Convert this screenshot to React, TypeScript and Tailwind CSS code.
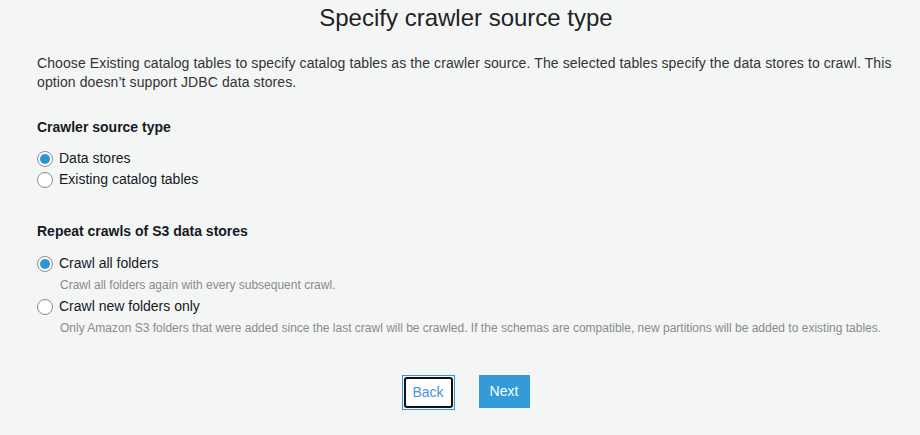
import React from "react";

function Radio({ checked }: { checked: boolean }) {
  return (
    <span className="flex h-[16px] w-[16px] shrink-0 items-center justify-center rounded-full border border-[#8c8c8c] bg-white">
      {checked && <span className="h-[10px] w-[10px] rounded-full bg-[#2e94d6]" />}
    </span>
  );
}

function Option({ checked, label }: { checked: boolean; label: string }) {
  return (
    <label className="flex h-[21px] items-center gap-[6px] text-[14px] text-[#16191f]">
      <Radio checked={checked} />
      <span>{label}</span>
    </label>
  );
}

export default function App() {
  return (
    <div
      className="min-h-[435px] w-[920px] bg-[#f4f6f6] pl-[37px] pr-[25px] pt-[3px]"
      style={{ fontFamily: '"Liberation Sans", Arial, sans-serif' }}
    >
      <h1 className="text-center text-[24px] leading-[30px] text-[#222]">Specify crawler source type</h1>
      <p className="mt-[21px] text-[14px] leading-[19px] tracking-[0.1px] text-[#333]">
        Choose Existing catalog tables to specify catalog tables as the crawler source. The selected tables specify the data stores to crawl. This option doesn’t support JDBC data stores.
      </p>
      <h2 className="mt-[26px] text-[14px] font-bold leading-[19px] text-[#16191f]">Crawler source type</h2>
      <div className="mt-[11px] flex flex-col">
        <Option checked label="Data stores" />
        <Option checked={false} label="Existing catalog tables" />
      </div>
      <h2 className="mt-[32px] text-[14px] font-bold leading-[19px] text-[#16191f]">Repeat crawls of S3 data stores</h2>
      <div className="mt-[12px] flex flex-col">
        <Option checked label="Crawl all folders" />
        <div className="pl-[23px] text-[12px] leading-[22px] text-[#8a8a8a]">Crawl all folders again with every subsequent crawl.</div>
        <Option checked={false} label="Crawl new folders only" />
        <div className="pl-[23px] text-[12px] leading-[22px] text-[#8a8a8a]">
          Only Amazon S3 folders that were added since the last crawl will be crawled. If the schemas are compatible, new partitions will be added to existing tables.
        </div>
      </div>
      <div className="mt-[36px] flex justify-center gap-[24px] pr-[1px]">
        <div className="border border-[#3a93d3] p-[1px]">
          <button className="flex h-[31px] w-[49px] items-center justify-center rounded-[3px] border-2 border-[#111] bg-white text-[14px] text-[#4a93d6]">
            Back
          </button>
        </div>
        <button className="flex h-[33px] w-[51px] items-center justify-center bg-[#339bd8] text-[14px] text-white">
          Next
        </button>
      </div>
    </div>
  );
}
